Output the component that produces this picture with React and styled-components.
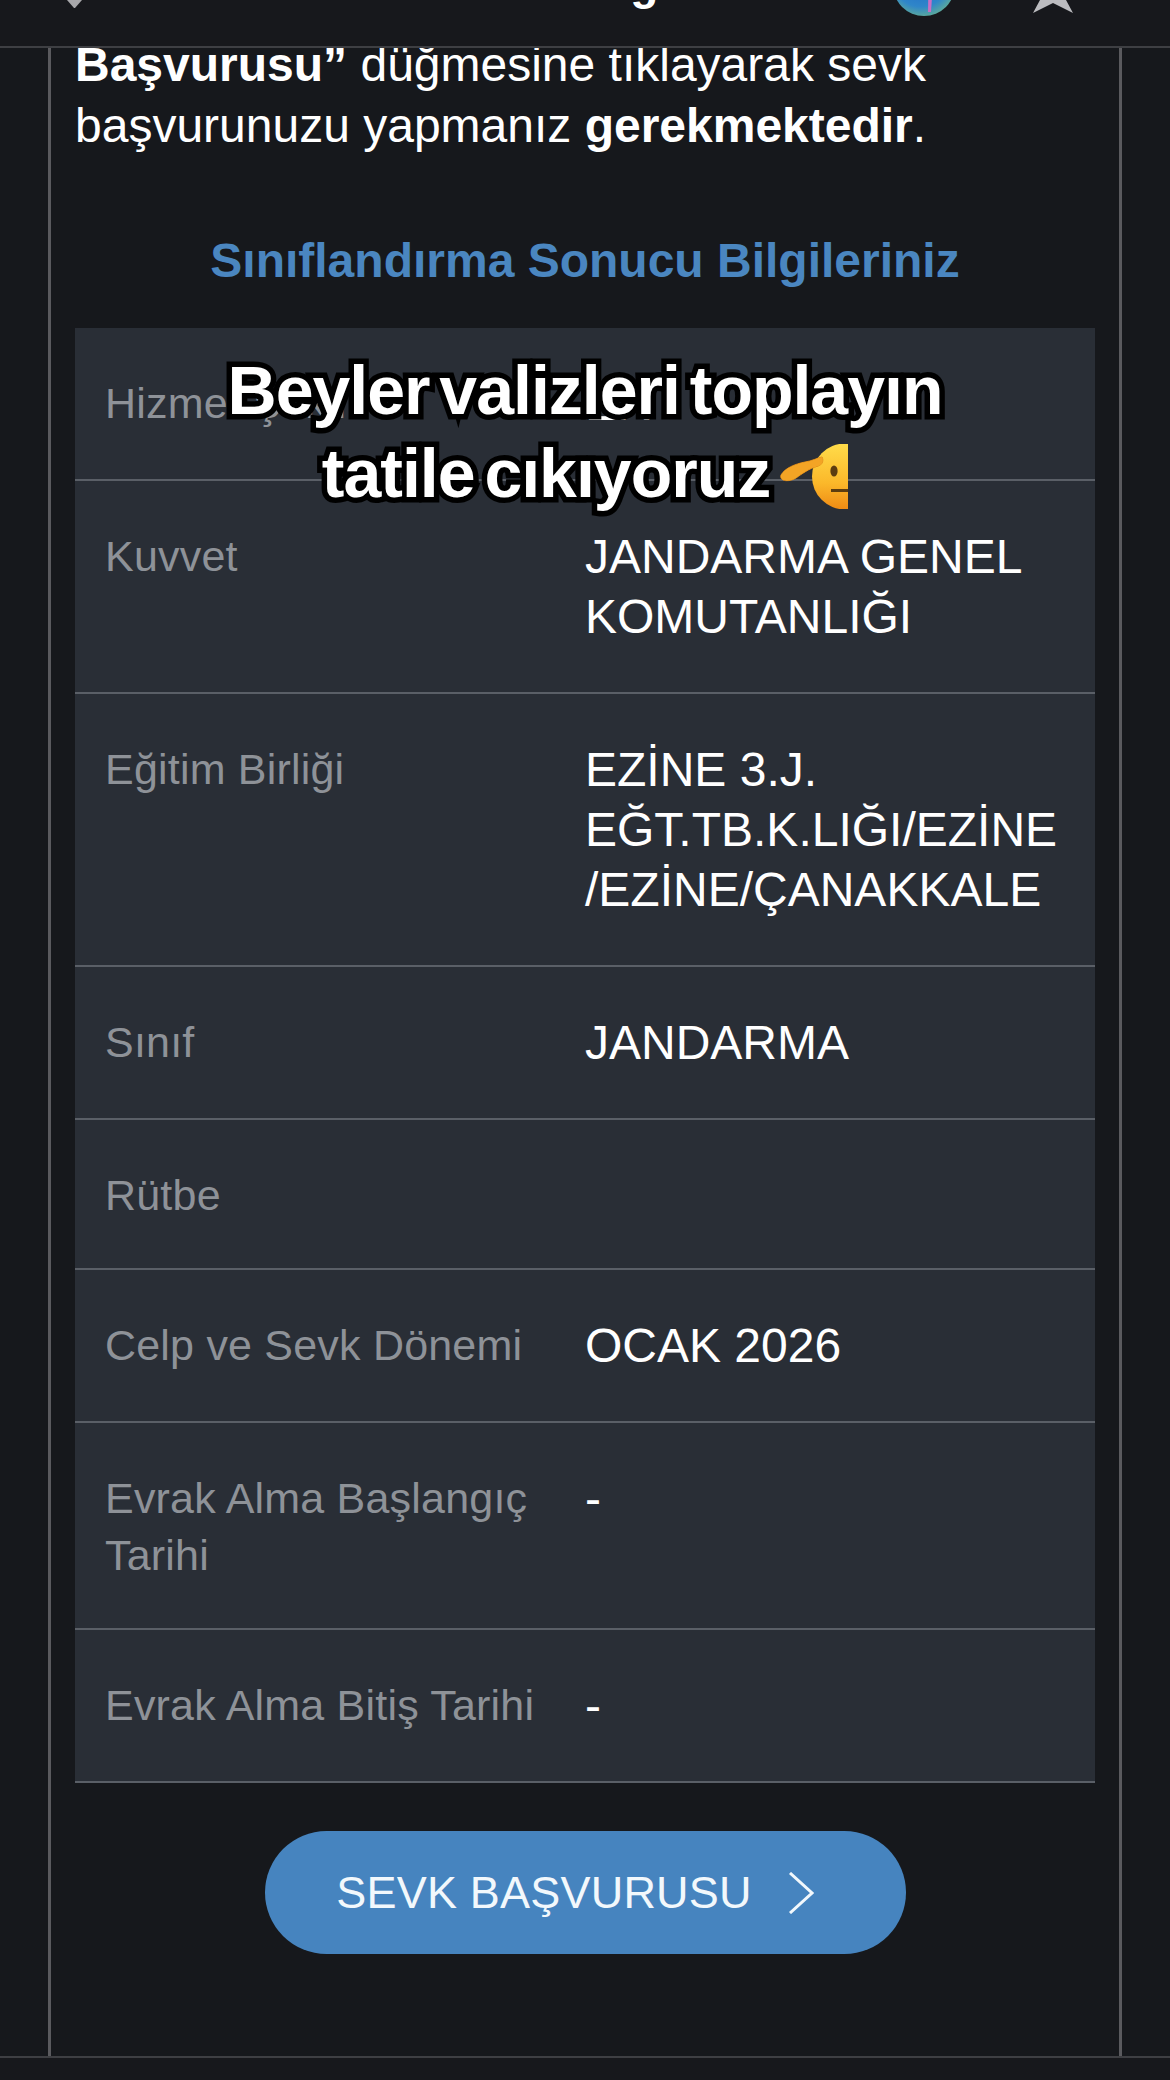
import React from 'react';
import styled, { createGlobalStyle } from 'styled-components';

const rows = [
  { label: 'Hizmet Şekli', value: 'ER' },
  { label: 'Kuvvet', value: 'JANDARMA GENEL KOMUTANLIĞI' },
  { label: 'Eğitim Birliği', value: 'EZİNE 3.J. EĞT.TB.K.LIĞI/EZİNE /EZİNE/ÇANAKKALE' },
  { label: 'Sınıf', value: 'JANDARMA' },
  { label: 'Rütbe', value: '' },
  { label: 'Celp ve Sevk Dönemi', value: 'OCAK 2026' },
  { label: 'Evrak Alma Başlangıç Tarihi', value: '-' },
  { label: 'Evrak Alma Bitiş Tarihi', value: '-' },
];

const App = () => {
  return (
    <Page>
      <GlobalStyle />
      <Header>
        <BackTip viewBox="0 0 15 8">
          <path d="M0 0 L15 0 L8 8 L7 8 Z" fill="#a8a8ab" />
        </BackTip>
        <Title>Askerlik Bilgileri</Title>
        <HeaderActions>
          <Orb viewBox="0 0 62 62">
            <defs>
              <radialGradient id="orb" cx="45%" cy="40%" r="60%">
                <stop offset="0%" stopColor="#1d63c9" />
                <stop offset="75%" stopColor="#2f86c9" />
                <stop offset="100%" stopColor="#58a6a0" />
              </radialGradient>
            </defs>
            <circle cx="31" cy="31" r="31" fill="url(#orb)" />
            <path d="M36 0 L42 0 L38 58 L35 58 Z" fill="#c86fc4" />
          </Orb>
          <Star viewBox="0 0 40 14">
            <path d="M7 0 L0 13 L20 3 L40 13 L33 0 Z" fill="#bcbcc0" />
          </Star>
        </HeaderActions>
      </Header>

      <Panel>
        <Intro>
          <strong>Başvurusu”</strong> düğmesine tıklayarak sevk
          <br />
          başvurunuzu yapmanız <strong>gerekmektedir</strong>.
        </Intro>
        <SectionTitle>Sınıflandırma Sonucu Bilgileriniz</SectionTitle>
        <InfoTable>
          {rows.map((row) => (
            <InfoRow key={row.label}>
              <Label>{row.label}</Label>
              <Value>{row.value}</Value>
            </InfoRow>
          ))}
        </InfoTable>
        <SubmitButton type="button">
          SEVK BAŞVURUSU
          <svg width="26" height="42" viewBox="0 0 26 42" fill="none">
            <path d="M2 1 L24 21 L2 41" stroke="#f2f8fc" strokeWidth="3" />
          </svg>
        </SubmitButton>
      </Panel>
      <Footer />

      <Caption>
        Beyler valizleri toplayın
        <br />
        tatile cıkıyoruz
        <Salute viewBox="0 0 68 65">
          <defs>
            <linearGradient id="face" x1="0" y1="0" x2="0" y2="1">
              <stop offset="0%" stopColor="#ffdc4a" />
              <stop offset="60%" stopColor="#fbb82a" />
              <stop offset="100%" stopColor="#ee8a14" />
            </linearGradient>
          </defs>
          <circle cx="65" cy="32.5" r="33" fill="url(#face)" />
          <path d="M1 31 C5 24 15 20 25 18 C32 17 37 14 42 13 C44 17 42 21 38 22 C28 25 22 30 16 34 C10 38 -1 38 1 31 Z" fill="#f3a425" stroke="#d98414" strokeWidth="1" />
          <ellipse cx="54" cy="27" rx="3.6" ry="5.5" fill="#5c3d10" />
          <rect x="51" y="45" width="17" height="3" fill="#5c3d10" />
        </Salute>
      </Caption>
    </Page>
  );
};

const GlobalStyle = createGlobalStyle`
  html, body {
    margin: 0;
    background: #16181c;
  }
`;

const Page = styled.div`
  position: relative;
  width: 1170px;
  height: 2080px;
  overflow: hidden;
  display: flex;
  flex-direction: column;
  background: #16181c;
  font-family: 'Liberation Sans', Arial, sans-serif;
`;

const Header = styled.header`
  position: relative;
  z-index: 1;
  flex: none;
  box-sizing: border-box;
  height: 48px;
  padding: 0 97px 0 67px;
  display: grid;
  grid-template-columns: 1fr auto 1fr;
  align-items: end;
  align-content: end;
  overflow: hidden;
  background: #17181c;
  border-bottom: 2px solid #3e3f43;
`;

const BackTip = styled.svg`
  width: 15px;
  height: 8px;
  margin-bottom: 38px;
`;

const Title = styled.div`
  margin: 0 20px 40px 0;
  font-size: 46px;
  line-height: 46px;
  font-weight: 700;
  color: #fff;
`;

const HeaderActions = styled.div`
  display: flex;
  justify-content: flex-end;
  align-items: flex-end;
  gap: 78px;
  margin-bottom: 30px;
`;

const Orb = styled.svg`
  width: 62px;
  height: 62px;
`;

const Star = styled.svg`
  display: block;
  width: 40px;
  height: 14px;
  margin-bottom: 2px;
`;

const Panel = styled.main`
  flex: 1;
  box-sizing: border-box;
  width: 1074px;
  margin-left: 48px;
  padding: 0 24px;
  border-left: 3px solid #5a5a5e;
  border-right: 3px solid #5a5a5e;
  display: flex;
  flex-direction: column;
  align-items: stretch;
`;

const Intro = styled.p`
  margin: -14px 0 0;
  font-size: 48px;
  line-height: 61px;
  color: #fff;
  strong {
    font-weight: 700;
  }
`;

const SectionTitle = styled.h2`
  margin: 75px 0 0;
  height: 60px;
  text-align: center;
  font-size: 48px;
  line-height: 60px;
  font-weight: 700;
  color: #4a86c0;
`;

const InfoTable = styled.div`
  margin-top: 37px;
  background: #292e36;
`;

const InfoRow = styled.div`
  display: grid;
  grid-template-columns: 480px 1fr;
  padding: 46px 30px 45px;
  border-bottom: 2px solid #5a5f67;
`;

const Label = styled.div`
  padding: 1px 20px 0 0;
  margin-bottom: -1px;
  font-size: 43px;
  line-height: 57px;
  letter-spacing: 0.2px;
  color: #8e9298;
`;

const Value = styled.div`
  font-size: 48px;
  line-height: 60px;
  color: #fff;
`;

const SubmitButton = styled.button`
  align-self: center;
  margin-top: 48px;
  padding: 0 20px 0 0;
  width: 641px;
  height: 123px;
  border: 0;
  border-radius: 62px;
  background: #4684bf;
  color: #f2f8fc;
  font-family: inherit;
  font-size: 45px;
  letter-spacing: 0.2px;
  display: flex;
  align-items: center;
  justify-content: center;
  gap: 36px;
`;

const Footer = styled.footer`
  flex: none;
  height: 22px;
  background: #17181c;
  border-top: 2px solid #3e3f43;
`;

const Caption = styled.div`
  position: absolute;
  left: 0;
  right: 0;
  top: 349px;
  text-align: center;
  font-size: 68px;
  line-height: 83px;
  font-weight: 700;
  letter-spacing: -1px;
  word-spacing: -8px;
  color: #fff;
  -webkit-text-stroke: 11px #000;
  paint-order: stroke fill;
`;

const Salute = styled.svg`
  display: inline-block;
  width: 68px;
  height: 65px;
  margin-left: 10px;
  vertical-align: -12px;
`;

export default App;
